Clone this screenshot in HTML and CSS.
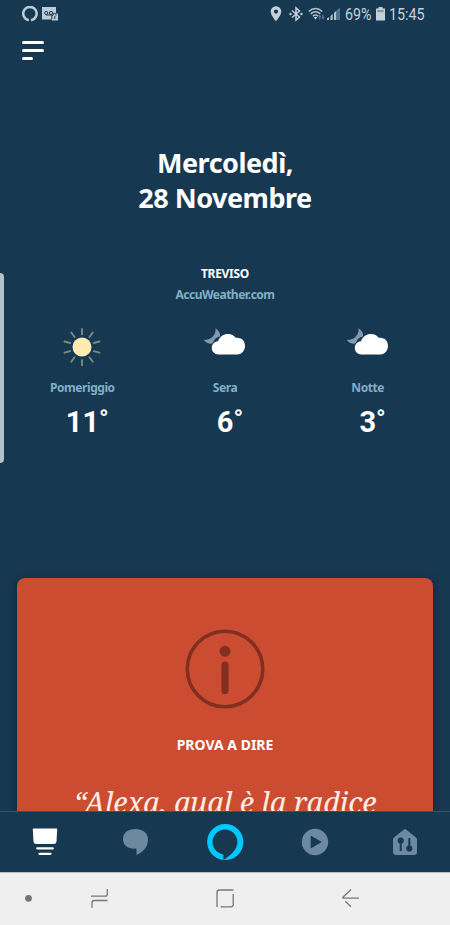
FILE: index.html
```html
<!DOCTYPE html>
<html lang="it">
<head>
<meta charset="utf-8">
<title>Alexa</title>
<link rel="stylesheet" href="styles.css">
</head>
<body>
<svg class="defs" width="0" height="0" aria-hidden="true">
  <symbol id="cloud" viewBox="0 0 44 30">
    <path class="moon" d="M12.500 1.200C15.500 3 17.800 6.500 16.900 9.600C13.500 10.300 11 12.500 10.100 15.400C8 18 2.500 16.400 .8 12.800C4.500 13.200 7.500 12.200 9.800 9.600C12 7 13 4 12.500 1.200Z"/>
    <path fill="#fff" d="M15.500 27.400C11.500 27.400 8.800 24.500 8.800 20.700C8.800 17 11.500 14.500 15 14.200C17 9.500 20.500 7 25 7C28.500 7 31 8.400 32.700 10.800C38.300 10 42 13.800 42 18.800C42 23.800 38.500 27.400 34.500 27.400Z"/>
  </symbol>
</svg>
<div class="phone">
  <header class="status">
    <div class="status-left">
      <svg width="16" height="16" viewBox="0 0 16 16"><path d="M6.900 14.200A6.700 6.700 0 1 1 9 14.200" fill="none" stroke="#bccbd6" stroke-width="2.500"/></svg>
      <svg width="17" height="14" viewBox="0 0 17 14"><path d="M0 0H14V6.500H16V13.500H10V12.500H0Z" fill="#bccbd6"/><g fill="none" stroke="#173851" stroke-width="1"><circle cx="4.200" cy="6" r="1.600"/><circle cx="9" cy="6" r="1.600"/><path d="M4 8H9.500M9.800 12V8.400H11V7Q12.500 5.500 14 7V8.500M12.800 9V12"/></g></svg>
    </div>
    <div class="status-right">
      <svg class="pin" width="12" height="16" viewBox="0 0 12 16"><path fill="#c5d1da" fill-rule="evenodd" d="M6 .3A5.300 5.300 0 0 1 11.300 5.600C11.300 9.500 6 15.400 6 15.400S.7 9.500 .7 5.600A5.300 5.300 0 0 1 6 .3ZM6 3.500A2.100 2.100 0 1 0 6 7.700A2.100 2.100 0 0 0 6 3.500Z"/></svg>
      <svg class="bt" width="14" height="16" viewBox="0 0 14 16"><path d="M3 4.500L10.500 11L7 14V2L10.500 5L3 11.500" fill="none" stroke="#c5d1da" stroke-width="1.500"/><circle cx="1.500" cy="8" r="1.200" fill="#c5d1da"/><circle cx="12.400" cy="8" r="1.200" fill="#c5d1da"/></svg>
      <svg class="wifi" width="18" height="14" viewBox="0 0 18 14"><g fill="none" stroke="#b3c2ce" stroke-width="1.500"><path d="M.7 4.500Q7.500 -1.500 14.300 4.500M2.700 6.900Q7.500 2.600 12.300 6.900M4.800 9.200Q7.500 6.800 10.200 9.200"/></g><path d="M5.800 10.500Q7.500 9 9.200 10.500L7.500 12.500Z" fill="#c5d1da"/><path d="M10 10L11.800 7.800L13.500 10H12.300V12.500H11.200V10ZM13.300 10H14.300V7.800H15.500V10H16.800L15 12.500Z" fill="#5d7990"/></svg>
      <svg class="signal" width="14" height="14" viewBox="0 0 14 14"><path fill="#b3c2ce" d="M0 13V11.500L2 10V13ZM3.500 13V9L5.700 7V13ZM7 13V6L9 4V13Z"/><path fill="#557189" d="M9 13V4L13 .5V13Z"/></svg>
      <span class="battery-text">69%</span>
      <svg class="battery" width="9" height="14" viewBox="0 0 9 14"><path fill="#c5d1da" d="M2.500 0H6.500V1.500H9V13.500H0V1.500H2.500Z"/><path fill="#8296a6" d="M1.300 3H7.700V5.200H1.300Z"/></svg>
      <span class="clock">15:45</span>
    </div>
  </header>

  <main class="home">
    <button class="menu" aria-label="Menu"><i></i><i></i><i></i></button>
    <h1>Mercoledì,<br><span>28 Novembre</span></h1>
    <section class="weather">
      <h2>TREVISO</h2>
      <p class="source">AccuWeather.com</p>
      <div class="forecast">
        <div class="slot first">
          <svg class="icon" width="44" height="40" viewBox="0 0 44 40"><circle cx="22" cy="20" r="9.500" fill="#ffebb0"/><g stroke="#7c8a81" stroke-width="1.900" stroke-linecap="round"><path d="M22 2V7.200M22 33V38.200M11.300 5.500L14.500 10M32.700 5.500L29.500 10M11.300 34.700L14.500 30.200M32.700 34.700L29.500 30.200M4.500 14.500L10.200 16M39.500 14.500L33.800 16M4.500 25.700L10.200 24.200M39.500 25.700L33.800 24.200"/></g></svg>
          <p class="when">Pomeriggio</p><p class="temp">11<sup>°</sup></p>
        </div>
        <div class="slot">
          <svg class="icon cloud" width="44" height="30"><use href="#cloud"/></svg>
          <p class="when">Sera</p><p class="temp">6<sup>°</sup></p>
        </div>
        <div class="slot last">
          <svg class="icon cloud" width="44" height="30"><use href="#cloud"/></svg>
          <p class="when">Notte</p><p class="temp">3<sup>°</sup></p>
        </div>
      </div>
    </section>
    <article class="card">
      <svg width="80" height="80" viewBox="0 0 80 80"><circle cx="40" cy="40" r="37.700" fill="none" stroke="#802f20" stroke-width="3.600"/><circle cx="40" cy="22.300" r="5.500" fill="#802f20"/><rect x="36.400" y="32.500" width="7.200" height="32.500" rx="3.600" fill="#802f20"/></svg>
      <h3>PROVA A DIRE</h3>
      <p class="quote">“Alexa, qual è la radice</p>
    </article>
    <div class="edge-handle"></div>
  </main>

  <nav class="tabs">
    <a><svg width="30" height="30" viewBox="0 0 30 30"><path fill="#fff" d="M3.500 1.500H26.500Q27.300 1.500 27.200 2.500L26.500 14.500Q26.200 17 23.700 17H6.300Q3.800 17 3.500 14.500L2.800 2.500Q2.700 1.500 3.500 1.500Z"/><path stroke="#fff" stroke-width="2.200" stroke-linecap="round" d="M7.200 21.300H22.800M9.500 26.800H20.500"/></svg></a>
    <a><svg width="30" height="30" viewBox="0 0 30 30"><path fill="#6c89a2" d="M15.300 2C22.500 2 28 5.500 28 12.500C28 20.500 22 26 16.500 27.800V21.600C8.500 22.500 3 18.500 3 12C3 5.500 8.500 2 15.300 2Z"/></svg></a>
    <a><svg width="38" height="38" viewBox="0 0 38 38"><path fill="#00c8ff" fill-rule="evenodd" d="M19 .9A18.100 18.100 0 1 1 17.400 37V31.500C10.300 30.200 6.600 25 6.600 19A12.400 12.400 0 1 1 31.400 19C31.400 26 26 31.500 17.400 37A18.100 18.100 0 0 1 19 .9Z"/></svg></a>
    <a><svg width="30" height="30" viewBox="0 0 30 30"><circle cx="15" cy="15" r="13.200" fill="#6c89a2"/><path fill="#173851" d="M10.700 8.500L21.800 15L10.700 21.500Z"/></svg></a>
    <a><svg width="30" height="30" viewBox="0 0 30 30"><path fill="#6c89a2" d="M14 2.500Q15 1.700 16 2.500L26 10.500Q27 11.300 27 12.500V25Q27 28 24 28H6Q3 28 3 25V12.500Q3 11.300 4 10.500Z"/><g stroke="#173851" stroke-width="2"><path d="M10.700 14V24M19.300 11V22"/></g><circle cx="10.700" cy="13.500" r="3.100" fill="#173851"/><circle cx="19.300" cy="21.500" r="3.100" fill="#173851"/></svg></a>
  </nav>

  <footer class="system">
    <svg width="450" height="52" viewBox="0 0 450 52"><circle cx="28.500" cy="25.300" r="3.400" fill="#757575"/><g fill="none" stroke="#777" stroke-width="1.300"><path d="M91 23.200H105Q107.300 23.200 107.300 21V16M107.500 27.500H94.300Q92 27.500 92 29.700V34.700M217 34V19.500Q217 17 219.500 17H233.500M233.200 21V31.500Q233.200 33.800 231 33.800H220.500M359 25.200H343.500Q342 25.200 343.200 24L351 16.500M345.300 28.200L351 33.700"/></g></svg>
  </footer>
</div>
</body>
</html>
```
FILE: styles.css
```css
* { box-sizing: border-box; }
body { margin: 0; background: #173851; font-family: "Noto Sans", sans-serif; color: #fff; }
h1, h2, h3, p { margin: 0; }
svg { display: block; flex: none; }
.defs { position: absolute; }
.phone { width: 450px; height: 925px; display: flex; flex-direction: column; overflow: hidden; }

.status { height: 28px; flex: none; display: flex; justify-content: space-between; padding: 0 24px 0 22px; color: #c5d1da; font-family: Roboto, sans-serif; font-size: 17px; }
.status-left, .status-right { display: flex; align-items: center; }
.status-left { gap: 4px; }
.status-right { width: 156px; }
.bt { margin-left: 7px; }
.wifi { margin-left: 5px; }
.signal { margin-left: 1px; }
.battery-text, .clock { display: block; white-space: nowrap; transform: scaleX(.84); transform-origin: left center; }
.battery-text { width: 27px; margin-left: 4px; }
.battery { margin-left: 4px; }
.clock { width: 36px; margin-left: 4px; }

.home { position: relative; flex: 1; min-height: 0; overflow: hidden; display: flex; flex-direction: column; }
.menu { margin: 13px 0 0 22px; padding: 0; border: 0; background: none; width: 22px; height: 19px; display: flex; flex-direction: column; justify-content: space-between; flex: none; }
.menu i { display: block; width: 22px; height: 2.600px; border-radius: 2px; background: #fff; }
.menu i:last-child { width: 11px; }
h1 { margin-top: 85px; text-align: center; font-size: 27px; line-height: 35px; font-weight: 700; letter-spacing: -.5px; }
.weather { margin-top: 50px; text-align: center; }
h2 { font-size: 12px; line-height: 18px; font-weight: 700; letter-spacing: -.3px; }
.source { margin-top: 3px; font-size: 12px; line-height: 18px; font-weight: 700; letter-spacing: -.5px; color: #82afc6; }
.forecast { margin: 23px 11px 0; display: grid; grid-template-columns: repeat(3, 1fr); }
.slot { display: flex; flex-direction: column; align-items: center; }
.icon { margin-bottom: 12px; }
.cloud { height: 30px; margin: 0 0 22px 1px; }
.moon { fill: #8299af; }
.when { font-size: 12px; line-height: 18px; font-weight: 700; letter-spacing: -.45px; color: #82afc6; }
.temp { margin: 7px 0 0 10px; font: 700 29px/36px Roboto, sans-serif; display: flex; }
.temp sup { font-size: 25px; line-height: 32px; font-weight: 700; }
.card { margin: 138px 17px 0; height: 400px; flex: none; border-radius: 8px 8px 0 0; background: #cb4c31; box-shadow: 0 2px 8px #0b2436; display: flex; flex-direction: column; align-items: center; padding-top: 51px; }
h3 { margin-top: 26px; font-size: 14px; line-height: 20px; font-weight: 700; }
.quote { margin-top: 29px; font: italic 400 29px/36px "Noto Serif", "Liberation Serif", serif; letter-spacing: -.2px; white-space: nowrap; color: #ffece5; }
.edge-handle { position: absolute; left: 0; top: 245px; width: 4px; height: 190px; border-radius: 0 4px 4px 0; background: #b4c0ca; }

.tabs { height: 61px; flex: none; border-top: 1px solid #32536b; display: grid; grid-template-columns: repeat(5, 1fr); }
.tabs a { display: grid; place-items: center; }
.system { height: 53px; flex: none; background: #efefef; border-top: 1px solid #b7bdc1; }
```
